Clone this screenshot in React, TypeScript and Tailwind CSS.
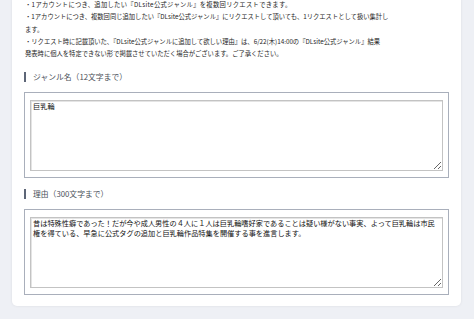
import React from "react";

const font = { fontFamily: '"Noto Sans CJK JP", "Noto Sans", sans-serif' };

function Heading({ label }: { label: string }) {
  return (
    <div className="flex h-[10px] items-center gap-[7px]">
      <div className="h-[10px] w-[2px] bg-[#5d6677]" />
      <div className="text-[7.8px] leading-[10px] text-[#4a4f58]">{label}</div>
    </div>
  );
}

function Box({ value }: { value: string }) {
  return (
    <div className="border border-[#a9afbb] bg-white px-[5px] pb-[6px] pt-[7px]">
      <textarea
        readOnly
        defaultValue={value}
        className="block h-[71px] w-full resize border border-[#c3c3c3] bg-white px-[2px] py-[1px] text-[7.2px] leading-[9.5px] text-[#111] shadow-[inset_1px_1px_0_#e4e4e4] outline-none"
        style={font}
      />
    </div>
  );
}

export default function App() {
  const lines = [
    "・1アカウントにつき、追加したい『DLsite公式ジャンル』を複数回リクエストできます。",
    "・1アカウントにつき、複数回同じ追加したい『DLsite公式ジャンル』にリクエストして頂いても、1リクエストとして扱い集計し",
    "ます。",
    "・リクエスト時に記載頂いた、『DLsite公式ジャンルに追加して欲しい理由』は、6/22(木)14:00の『DLsite公式ジャンル』結果",
    "発表時に個人を特定できない形で掲載させていただく場合がございます。ご了承ください。",
  ];
  return (
    <div className="h-[319px] w-[474px] overflow-hidden bg-[#eef0f5]" style={font}>
      <div className="ml-[12px] w-[449px] rounded-b-[5px] bg-white px-[12px] pb-[11px] shadow-[0_0_3px_rgba(0,0,0,0.08)]">
        <div className="-mt-[1px] pl-[1px] text-[6.3px] leading-[12.25px] text-[#262626]">
          {lines.map((l, i) => (
            <div key={i} className={i === 0 ? "whitespace-nowrap tracking-[0.3px]" : "whitespace-nowrap"}>
              {l}
            </div>
          ))}
        </div>
        <div className="mt-[12px]">
          <Heading label="ジャンル名（12文字まで）" />
        </div>
        <div className="mt-[10px]">
          <Box value="巨乳輪" />
        </div>
        <div className="mt-[11px]">
          <Heading label="理由（300文字まで）" />
        </div>
        <div className="mt-[10px]">
          <Box value={"昔は特殊性癖であった！だが今や成人男性の４人に１人は巨乳輪嗜好家であることは疑い様がない事実、よって巨乳輪は市民\n権を得ている、早急に公式タグの追加と巨乳輪作品特集を開催する事を進言します。"} />
        </div>
      </div>
    </div>
  );
}
